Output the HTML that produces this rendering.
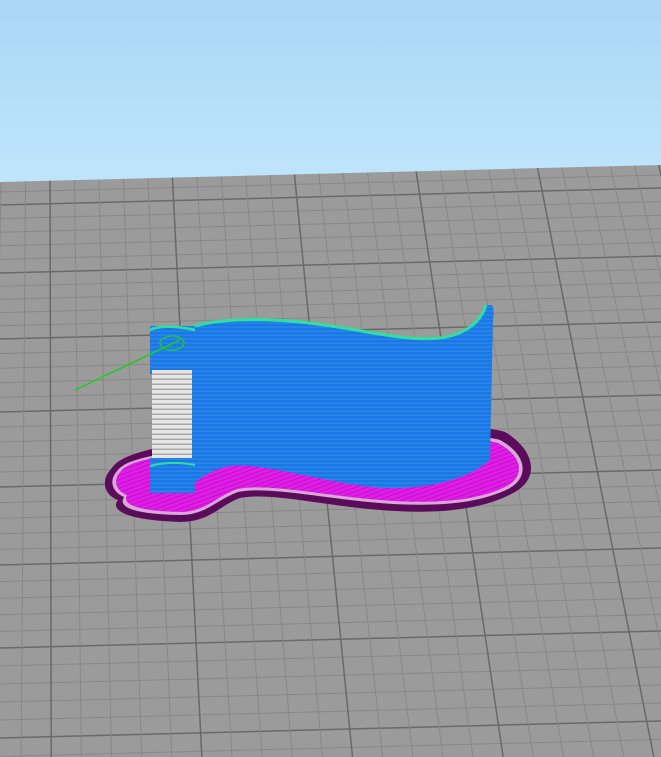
<!DOCTYPE html>
<html><head><meta charset="utf-8"><style>
html,body{margin:0;padding:0;width:661px;height:757px;overflow:hidden;background:#9b9b9b}
svg{display:block}
</style></head><body>
<svg id="s" width="661" height="757" viewBox="0 0 661 757" xmlns="http://www.w3.org/2000/svg">
<defs>
<linearGradient id="sky" x1="0" y1="0" x2="0" y2="1">
<stop offset="0" stop-color="#a9d7f6"/><stop offset="1" stop-color="#bfe5fb"/>
</linearGradient>
<clipPath id="fl"><polygon points="0,182 661,165 661,757 0,757"/></clipPath>
<pattern id="stripe" width="6" height="4" patternUnits="userSpaceOnUse">
<rect width="6" height="4" fill="#1a78e6"/><rect y="2.6" width="6" height="1" fill="#3a96f0" opacity=".7"/>
</pattern>
<pattern id="mag" width="4" height="4" patternUnits="userSpaceOnUse" patternTransform="rotate(-20)">
<rect width="4" height="4" fill="#e21ee6"/><rect y="3" width="4" height="1" fill="#c010cc"/>
</pattern>
<pattern id="wht" width="6" height="5" patternUnits="userSpaceOnUse">
<rect width="6" height="5" fill="#e6e6e6"/><rect y="3.5" width="6" height="1.5" fill="#a8a8a8"/>
</pattern>
</defs>
<rect width="661" height="757" fill="#9b9b9b"/>
<polygon points="0,0 661,0 661,165 0,182" fill="url(#sky)"/>
<g id="grid" fill="none" clip-path="url(#fl)"></g>
<!-- base -->
<path d="M112,468 C100,480 104,495 118,500 C110,510 125,520 180,522 C210,522 220,505 240,498 C270,492 320,505 380,510 C430,514 480,512 515,492 C540,478 535,450 505,432 C470,420 300,430 200,440 C150,448 120,455 112,468 Z" fill="#5a0c5a"/>
<path d="M118,470 C108,480 112,492 124,497 C118,507 132,514 180,515 C206,515 216,500 238,492 C268,486 320,498 380,503 C430,507 478,505 510,488 C530,476 526,454 500,440 C468,430 300,438 200,448 C150,455 126,460 118,470 Z" fill="#d8a8d8"/>
<path d="M121,471 C112,480 116,491 127,495 C122,504 135,511 180,512 C205,512 214,498 237,489 C268,483 320,495 380,500 C430,504 476,502 507,486 C526,475 522,456 498,443 C466,433 300,441 200,451 C152,457 128,462 121,471 Z" fill="url(#mag)"/>
<!-- wall -->
<path d="M185,330 C210,318 260,318 300,322 C360,328 400,342 440,338 C470,334 482,318 486,305 L492,305 C494,310 494,315 493,320 L490,460 C470,478 430,490 380,488 C330,484 260,462 230,466 C210,470 196,480 188,490 Z" fill="url(#stripe)"/>
<path d="M185,330 C210,318 260,318 300,322 C360,328 400,342 440,338 C470,334 482,318 486,305" stroke="#2ee0a0" stroke-width="3" fill="none"/>
<!-- left column -->
<rect x="150" y="326" width="45" height="48" fill="url(#stripe)"/>
<path d="M150,330 C160,325 175,326 195,330" stroke="#2ee0a0" stroke-width="2.5" fill="none"/>
<rect x="152" y="370" width="40" height="92" fill="url(#wht)"/>
<rect x="150" y="458" width="45" height="35" fill="url(#stripe)"/>
<path d="M150,466 C165,462 180,462 195,465" stroke="#2ee0a0" stroke-width="2" fill="none"/>
<line x1="75" y1="390" x2="180" y2="340" stroke="#22cc22" stroke-width="1.5"/>
<ellipse cx="172" cy="343" rx="12" ry="7" stroke="#22cc22" stroke-width="1.3" fill="none"/>
</svg>
<script>
(function(){
var g=document.getElementById('grid'),ns='http://www.w3.org/2000/svg';
function L(x1,y1,x2,y2,maj){var l=document.createElementNS(ns,'line');l.setAttribute('x1',x1);l.setAttribute('y1',y1);l.setAttribute('x2',x2);l.setAttribute('y2',y2);l.setAttribute('stroke',maj?'#696969':'#888888');l.setAttribute('stroke-width',maj?1.5:1);g.appendChild(l);}
var rows=[140,205,273,339,412,487,565,648,738,830];
for(var i=0;i<rows.length-1;i++){for(var j=0;j<5;j++){var y=rows[i]+(rows[i+1]-rows[i])*j/5;L(0,y,661,y-17,j==0);}}
for(var k=-2;k<=6;k++){for(var j=0;j<5;j++){var xt=50+(k+j/5)*121;var yt=175;var xb=45+(xt-45)*1.245;L(xt,150,xb+(xb-xt)*0,757,j==0);}}
})();
</script>
</body></html>
